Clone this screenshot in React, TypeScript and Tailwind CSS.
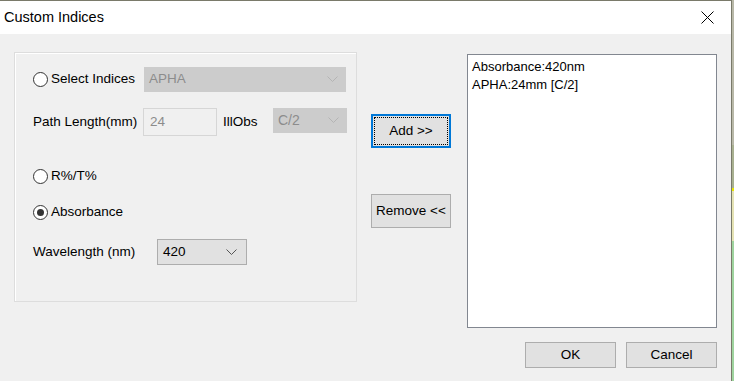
import React from "react";

const font = { fontFamily: '"Liberation Sans", Arial, sans-serif' };

function Chevron({ color }: { color: string }) {
  return (
    <svg width="11" height="7" viewBox="0 0 11 7" className="shrink-0">
      <path d="M0.5 0.5 L5.5 5.5 L10.5 0.5" fill="none" stroke={color} strokeWidth="1" />
    </svg>
  );
}

function Radio({ checked }: { checked?: boolean }) {
  return (
    <div className="w-[15px] h-[15px] rounded-full border border-[#333333] bg-white flex items-center justify-center shrink-0">
      {checked && <div className="w-[7px] h-[7px] rounded-full bg-[#333333]" />}
    </div>
  );
}

export default function App() {
  return (
    <div className="w-[734px] h-[381px] flex overflow-hidden text-[13.5px] text-black" style={font}>
      <div className="w-[732px] h-[381px] flex flex-col border-t border-r border-[#7a7a6a] bg-[#f0f0f0]">
        {/* Title bar */}
        <div className="h-[33px] bg-white flex items-center justify-between pl-[4px] pr-[17px] shrink-0">
          <span className="text-[14.5px] leading-none text-black">Custom Indices</span>
          <svg width="13" height="13" viewBox="0 0 13 13">
            <path d="M0.5 0.5 L12.5 12.5 M12.5 0.5 L0.5 12.5" stroke="#000" strokeWidth="1" />
          </svg>
        </div>
        {/* Body */}
        <div className="flex flex-1 pl-[14px] pt-[18px]">
          {/* Group box */}
          <div className="w-[343px] h-[250px] border border-[#dddddd] shadow-[inset_1px_1px_0_#ffffff] flex flex-col pl-[18px]">
            <div className="mt-[14px] h-[25px] flex items-center">
              <Radio />
              <span className="ml-[3px] w-[93px]">Select Indices</span>
              <div className="w-[202px] h-[25px] bg-[#cccccc] flex items-center justify-between pl-[5px] pr-[8px] text-[#8c8c8c]">
                <span>APHA</span>
                <Chevron color="#b4b4b4" />
              </div>
            </div>
            <div className="mt-[16px] h-[28px] flex items-center">
              <span className="w-[110px]">Path Length(mm)</span>
              <div className="w-[74px] h-[28px] border border-[#d6d6d6] bg-[#f0f0f0] flex items-center pl-[6px] text-[#8c8c8c]">24</div>
              <span className="ml-[6px] w-[50px]">IllObs</span>
              <div className="w-[74px] h-[25px] self-start bg-[#cccccc] flex items-center justify-between pl-[5px] pr-[8px] text-[#8c8c8c] text-[14px]">
                <span>C/2</span>
                <Chevron color="#b4b4b4" />
              </div>
            </div>
            <div className="mt-[32px] h-[17px] flex items-center">
              <Radio />
              <span className="ml-[3px]">R%/T%</span>
            </div>
            <div className="mt-[19px] h-[17px] flex items-center">
              <Radio checked />
              <span className="ml-[3px]">Absorbance</span>
            </div>
            <div className="mt-[18px] h-[26px] flex items-center">
              <span className="w-[124px]">Wavelength (nm)</span>
              <div className="w-[90px] h-[26px] bg-[#e1e1e1] border border-[#adadad] flex items-center justify-between pl-[5px] pr-[9px]">
                <span>420</span>
                <Chevron color="#555555" />
              </div>
            </div>
          </div>
          {/* Middle buttons */}
          <div className="ml-[14px] flex flex-col pt-[62px]">
            <div className="relative w-[80px] h-[34px] border-2 border-[#0078d7] bg-[#e1e1e1] flex items-center justify-center">
              <div className="absolute inset-[1px] border border-dotted border-[#000000]" />
              <span>Add &gt;&gt;</span>
            </div>
            <div className="mt-[46px] w-[80px] h-[34px] border border-[#adadad] bg-[#e1e1e1] flex items-center justify-center">
              <span>Remove &lt;&lt;</span>
            </div>
          </div>
          {/* Right column */}
          <div className="ml-[16px] mt-[2px] flex flex-col">
            <div className="w-[250px] h-[274px] bg-white border border-[#828790] pl-[4px] pt-[3px] leading-[18px] text-[13px]">
              <div>Absorbance:420nm</div>
              <div>APHA:24mm [C/2]</div>
            </div>
            <div className="mt-[14px] flex justify-end gap-[10px]">
              <div className="w-[91px] h-[26px] border border-[#adadad] bg-[#e1e1e1] flex items-center justify-center">OK</div>
              <div className="w-[91px] h-[26px] border border-[#adadad] bg-[#e1e1e1] flex items-center justify-center">Cancel</div>
            </div>
          </div>
        </div>
      </div>
      {/* sliver of background window */}
      <div className="w-[2px] h-[381px] flex flex-col">
        <div className="h-[145px] bg-[#b8b8a8]" />
        <div className="h-[43px] bg-[#a8b090]" />
        <div className="h-[3px] bg-[#e6e600]" />
        <div className="h-[50px] bg-[#e4e2b4]" />
        <div className="flex-1 bg-[#9ed39e]" />
      </div>
    </div>
  );
}
